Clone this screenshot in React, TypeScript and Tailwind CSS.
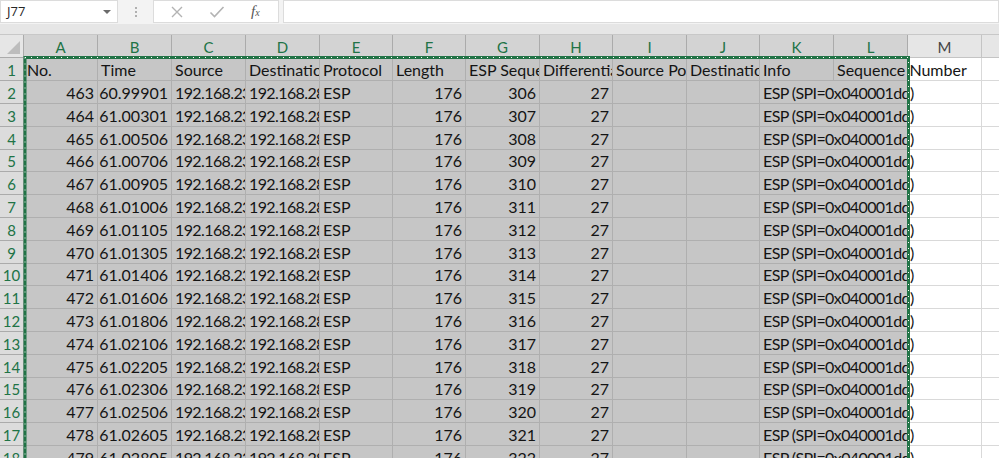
import React from 'react'

const cols = [
  { l: 'A', w: 'w-[74px]', sel: true },
  { l: 'B', w: 'w-[74px]', sel: true },
  { l: 'C', w: 'w-[74px]', sel: true },
  { l: 'D', w: 'w-[74px]', sel: true },
  { l: 'E', w: 'w-[73px]', sel: true },
  { l: 'F', w: 'w-[73px]', sel: true },
  { l: 'G', w: 'w-[74px]', sel: true },
  { l: 'H', w: 'w-[73px]', sel: true },
  { l: 'I', w: 'w-[74px]', sel: true },
  { l: 'J', w: 'w-[73px]', sel: true },
  { l: 'K', w: 'w-[74px]', sel: true },
  { l: 'L', w: 'w-[74px]', sel: true },
  { l: 'M', w: 'w-[74px]', sel: false },
  { l: 'N', w: 'w-[74px]', sel: false },
]

const header = ['No.', 'Time', 'Source', 'Destination', 'Protocol', 'Length', 'ESP Sequence', 'Differentiation', 'Source Port', 'Destination Port', 'Info', 'Sequence Number']

const times = [
  '60.99901', '61.00301', '61.00506', '61.00706', '61.00905', '61.01006', '61.01105', '61.01305',
  '61.01406', '61.01606', '61.01806', '61.02106', '61.02205', '61.02306', '61.02506', '61.02605', '61.02805',
]

type Cell = { t: string; right?: boolean; spill?: boolean; tight?: boolean }

function rowCells(r: number): Cell[] {
  if (r === 1) {
    return [
      ...header.slice(0, 11).map((t) => ({ t })),
      { t: header[11], spill: true },
      { t: '' },
      { t: '' },
    ]
  }
  const i = r - 2
  return [
    { t: String(463 + i), right: true },
    { t: times[i], right: true },
    { t: '192.168.235.1', tight: true },
    { t: '192.168.28.2', tight: true },
    { t: 'ESP' },
    { t: '176', right: true },
    { t: String(306 + i), right: true },
    { t: '27', right: true },
    { t: '' },
    { t: '' },
    { t: 'ESP (SPI=0x040001dd)', spill: true, tight: true },
    { t: '' },
    { t: '' },
    { t: '' },
  ]
}

function Toolbar() {
  return (
    <div className="flex h-[24px] bg-[#f3f3f3] font-['Open_Sans',sans-serif]">
      <div className="w-[118px] h-[23px] bg-white border border-[#dcdcdc] flex items-center justify-between pl-[6px] pr-[6px] text-[13px] text-[#262626]">
        <span>J77</span>
        <span className="w-0 h-0 border-l-[4px] border-r-[4px] border-t-[4px] border-l-transparent border-r-transparent border-t-[#6b6b6b]" />
      </div>
      <div className="w-[35px] flex items-center justify-center">
        <span className="flex flex-col gap-[2px]">
          <span className="w-[2px] h-[2px] bg-[#b0b0b0]" />
          <span className="w-[2px] h-[2px] bg-[#b0b0b0]" />
          <span className="w-[2px] h-[2px] bg-[#b0b0b0]" />
        </span>
      </div>
      <div className="w-[126px] h-[23px] bg-white border border-[#dcdcdc] flex items-center">
        <svg width="14" height="14" viewBox="0 0 14 14" className="ml-[16px]">
          <path d="M2 2 L12 12 M12 2 L2 12" stroke="#b3b3b3" strokeWidth="1.4" fill="none" />
        </svg>
        <svg width="16" height="14" viewBox="0 0 16 14" className="ml-[25px]">
          <path d="M1.5 7.5 L5.5 11.5 L14.5 2" stroke="#b3b3b3" strokeWidth="1.6" fill="none" />
        </svg>
        <span className="ml-[26px] font-['Liberation_Serif',serif] italic text-[15px] text-[#555] leading-none">
          f<span className="text-[10px] font-['Liberation_Serif',serif]">x</span>
        </span>
      </div>
      <div className="w-[4px]" />
      <div className="flex-1 h-[23px] bg-white border border-[#dcdcdc]" />
    </div>
  )
}

export default function App() {
  const rows = Array.from({ length: 18 }, (_, i) => i + 1)

  return (
    <div className="w-[999px] h-[458px] overflow-hidden bg-white font-['Lato',sans-serif]">
      <Toolbar />
      <div className="h-[10px] bg-[#e6e6e6]" />

      <div className="relative">
        {/* Column headers */}
        <div className="flex h-[24px] bg-[#e6e6e6] border-t border-[#c8c8c8]">
          <div className="w-[24px] shrink-0 relative border-r border-b border-[#ababab] bg-[#e6e6e6]">
            <svg width="13" height="13" viewBox="0 0 13 13" className="absolute right-[3px] bottom-[3px]">
              <path d="M13 0 L13 13 L0 13 Z" fill="#bdbdbd" />
            </svg>
          </div>
          {cols.map((c) => (
            <div
              key={c.l}
              className={`${c.w} shrink-0 flex items-end justify-center pb-[1px] text-[15px] leading-[18px] border-r border-b ${
                c.sel ? 'bg-[#d3d3d3] text-[#217346] border-[#ababab]' : 'bg-[#e6e6e6] text-[#444] border-[#c4c4c4]'
              }`}
            >
              {c.l}
            </div>
          ))}
        </div>

        {/* Rows */}
        {rows.map((r, i) => {
          const cells = rowCells(r)
          return (
            <div key={r} className={`flex ${i % 5 === 4 ? 'h-[22px]' : 'h-[23px]'}`}>
              <div className="w-[24px] shrink-0 flex items-end justify-center pb-[1px] text-[15px] leading-[18px] bg-[#dcdcdc] text-[#217346] border-r border-b border-[#ababab]">
                {r}
              </div>
              {cols.map((c, ci) => {
                const cell = cells[ci]
                const spillK = cell.spill && ci === 10
                return (
                  <div
                    key={c.l}
                    className={`${c.w} shrink-0 relative flex items-end pb-[1px] text-[16px] leading-[18px] text-[#141414] border-b ${
                      spillK ? '' : 'border-r'
                    } ${c.sel ? 'bg-[#c6c6c6] border-[#afafaf]' : 'bg-white border-[#d9d9d9]'} ${
                      cell.spill ? '' : 'overflow-hidden'
                    } ${cell.right ? 'justify-end pr-[3px]' : 'pl-[3px]'} ${cell.tight ? 'tracking-[-0.6px]' : ''}`}
                  >
                    {cell.spill ? (
                      <span className="absolute left-[3px] bottom-[1px] whitespace-nowrap z-10">{cell.t}</span>
                    ) : (
                      <span className="whitespace-nowrap">{cell.t}</span>
                    )}
                  </div>
                )
              })}
            </div>
          )
        })}

        {/* Copy marquee */}
        <svg className="absolute left-[23px] top-[22px] z-20" width="888" height="420">
          <rect x="2" y="1.5" width="883.5" height="500" fill="none" stroke="#217346" strokeWidth="3" />
          <rect x="2" y="1.5" width="883.5" height="500" fill="none" stroke="#ffffff" strokeWidth="1" strokeDasharray="1 5" />
        </svg>
      </div>
    </div>
  )
}
